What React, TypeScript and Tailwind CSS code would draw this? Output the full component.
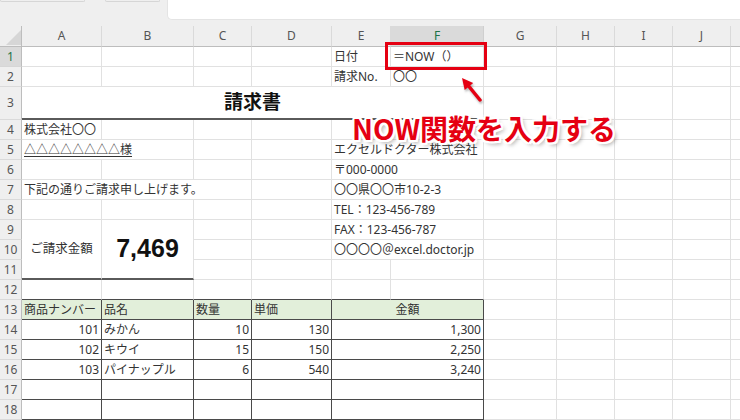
import { Fragment, type ReactNode } from "react";

type Cell = {
  span?: string;
  b?: string;
  text?: ReactNode;
  cls?: string;
};

// cell borders
const line = "border-r border-b border-[#e1e1e1]";
const box = "border-r border-b border-[#4a4a4a]";
const boxTop = "border-r border-b border-r-[#e1e1e1] border-b-[#4a4a4a]";
const heavy = "border-r border-b-2 border-r-[#e1e1e1] border-b-[#5a5a5a]";

const left = "justify-start pl-[2px]";
const right = "justify-end pr-[2px]";
const center = "justify-center";

const blank = (n: number, b = line): Cell[] =>
  Array.from({ length: n }, () => ({ b }));

const COLS = ["A", "B", "C", "D", "E", "F", "G", "H", "I", "J", "K"];

const items = [
  ["101", "みかん", "10", "130", "1,300"],
  ["102", "キウイ", "15", "150", "2,250"],
  ["103", "パイナップル", "6", "540", "3,240"],
];

const rows: Cell[][] = [
  // 1
  [...blank(4), { text: "日付", cls: left }, { text: "＝NOW（）", cls: left }, ...blank(5)],
  // 2
  [...blank(4), { text: "請求No.", cls: left }, { text: "〇〇", cls: left }, ...blank(5)],
  // 3
  [
    {
      span: "col-span-6",
      b: heavy,
      text: "請求書",
      cls: "justify-center text-[19px] font-bold text-[#111]",
    },
    ...blank(5),
  ],
  // 4
  [{ text: "株式会社〇〇", cls: left }, ...blank(10)],
  // 5
  [
    { span: "col-span-2", text: <span className="underline underline-offset-2">△△△△△△△△様</span>, cls: left },
    ...blank(2),
    { span: "col-span-2", text: "エクセルドクター株式会社", cls: left },
    ...blank(5),
  ],
  // 6
  [...blank(4), { span: "col-span-2", text: "〒000-0000", cls: left }, ...blank(5)],
  // 7
  [
    { span: "col-span-3", text: "下記の通りご請求申し上げます。", cls: left },
    ...blank(1),
    { span: "col-span-2", text: "〇〇県〇〇市10-2-3", cls: left },
    ...blank(5),
  ],
  // 8
  [...blank(4), { span: "col-span-2", text: "TEL：123-456-789", cls: left }, ...blank(5)],
  // 9
  [
    { span: "row-span-3", b: heavy, text: "ご請求金額", cls: "justify-center text-[12.5px]" },
    {
      span: "row-span-3",
      b: heavy,
      text: "7,469",
      cls: "justify-center font-['Liberation_Sans',sans-serif] text-[25px] font-bold text-[#111]",
    },
    ...blank(2),
    { span: "col-span-2", text: "FAX：123-456-787", cls: left },
    ...blank(5),
  ],
  // 10
  [...blank(2), { span: "col-span-2", text: "〇〇〇〇＠excel.doctor.jp", cls: left }, ...blank(5)],
  // 11
  [...blank(9)],
  // 12
  [...blank(6, boxTop), ...blank(5)],
  // 13
  [
    { b: `${box} bg-[#e2efda]`, text: "商品ナンバー", cls: left },
    { b: `${box} bg-[#e2efda]`, text: "品名", cls: left },
    { b: `${box} bg-[#e2efda]`, text: "数量", cls: left },
    { b: `${box} bg-[#e2efda]`, text: "単価", cls: left },
    { span: "col-span-2", b: `${box} bg-[#e2efda]`, text: "金額", cls: center },
    ...blank(5),
  ],
  // 14 - 16
  ...items.map((it): Cell[] => [
    { b: box, text: it[0], cls: right },
    { b: box, text: it[1], cls: left },
    { b: box, text: it[2], cls: right },
    { b: box, text: it[3], cls: right },
    { span: "col-span-2", b: box, text: it[4], cls: right },
    ...blank(5),
  ]),
  // 17 - 18
  [...blank(4, box), { span: "col-span-2", b: box }, ...blank(5)],
  [...blank(4, box), { span: "col-span-2", b: box }, ...blank(5)],
];

export default function App() {
  return (
    <div className="relative w-[740px] h-[420px] overflow-hidden bg-white font-['Noto_Sans','Noto_Sans_CJK_JP',sans-serif] text-[12px] text-[#333]">
      {/* ribbon edge */}
      <div className="flex h-[26px] items-start bg-[#efefef]">
        <div className="h-[2px] w-[85px] rounded-b-[3px] border-x border-b border-[#d6d6d6]" />
        <div className="ml-[20px] h-[2px] w-[55px] rounded-b-[3px] border-x border-b border-[#d6d6d6]" />
        <div className="ml-[7px] h-[20px] flex-1 rounded-bl-[5px] border-b border-l border-[#e4e4e4] bg-white" />
      </div>

      {/* sheet */}
      <div className="grid w-[800px] grid-cols-[22px_80px_92px_58px_80px_59px_93px_73px_58px_58px_58px_58px] grid-rows-[21px_20px_20px_33px_repeat(15,20px)]">
        <div className="relative border-r border-b border-[#bdbdbd] bg-[#efefef]">
          <svg className="absolute right-0 bottom-[1px]" width="15" height="15" viewBox="0 0 15 15">
            <path d="M15 0 L15 15 L0 15 Z" fill="#d6d6d6" />
          </svg>
        </div>
        {COLS.map((c) => (
          <div
            key={c}
            className={
              c === "F"
                ? "flex items-center justify-center border-r border-b border-r-[#cfcfcf] border-b-[#bdbdbd] bg-[#dadada] text-[#217346]"
                : "flex items-center justify-center border-r border-b border-r-[#dadada] border-b-[#bdbdbd] bg-[#efefef] text-[#555]"
            }
          >
            {c}
          </div>
        ))}

        {rows.map((cells, i) => (
          <Fragment key={i}>
            <div
              className={
                i === 0
                  ? "flex items-center justify-center border-r border-b border-r-[#bdbdbd] border-b-[#d6d6d6] bg-[#dadada] text-[#217346]"
                  : "flex items-center justify-center border-r border-b border-r-[#bdbdbd] border-b-[#dadada] bg-[#efefef] text-[#555]"
              }
            >
              {i + 1}
            </div>
            {cells.map((c, j) => (
              <div
                key={j}
                className={`${c.b ?? line} ${c.span ?? ""} ${c.cls ?? ""} flex min-w-0 items-center overflow-hidden whitespace-nowrap`}
              >
                {c.text}
              </div>
            ))}
          </Fragment>
        ))}
      </div>

      {/* callout */}
      <div className="absolute left-[385px] top-[42px] h-[28px] w-[102px] border-[3px] border-[#e50012]" />
      <svg
        className="absolute left-[455px] top-[72px] drop-shadow-[1px_2px_1px_rgba(0,0,0,0.3)]"
        width="32"
        height="32"
        viewBox="0 0 32 32"
      >
        <path d="M7 6 L18.2 11 L9.7 18 Z" fill="#e50012" />
        <line x1="14" y1="14.5" x2="25" y2="28" stroke="#e50012" strokeWidth="3.5" strokeLinecap="round" />
      </svg>
      <div className="absolute left-[352px] top-[114px] font-['Noto_Sans_CJK_JP',sans-serif] text-[28px] font-bold leading-[28px] text-[#e50012] [text-shadow:-2px_-2px_0_#fff,2px_-2px_0_#fff,-2px_2px_0_#fff,2px_2px_0_#fff,0_-2px_0_#fff,0_2px_0_#fff,-2px_0_0_#fff,2px_0_0_#fff,3px_3px_4px_rgba(0,0,0,0.35)]">
        NOW関数を入力する
      </div>
    </div>
  );
}
